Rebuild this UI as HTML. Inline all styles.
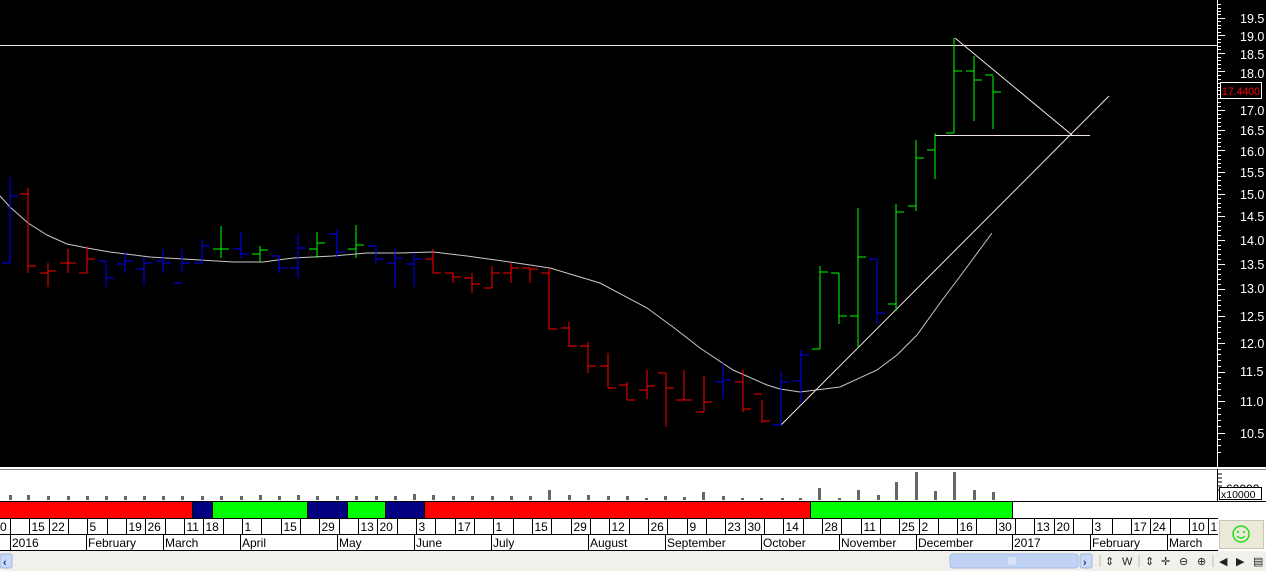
<!DOCTYPE html>
<html><head><meta charset="utf-8"><style>
body{margin:0;width:1266px;height:571px;overflow:hidden;background:#fff;font-family:"Liberation Sans",sans-serif}
svg{display:block}
</style></head><body>
<svg width="1266" height="571" xmlns="http://www.w3.org/2000/svg" font-family="Liberation Sans, sans-serif">
<rect x="0" y="0" width="1266" height="467" fill="#000"/>
<line x1="0" y1="45.5" x2="1217" y2="45.5" stroke="#f3e4e4" stroke-width="1"/>
<polyline fill="none" stroke="#c8c8c8" stroke-width="1" points="0,196 10,207 28,223 47,235 67,244 87,248 110,252 150,257 200,260 233,262 263,262 293,258 333,256 367,253 400,253 433,252 467,256 510,262 550,268 600,283 647,308 673,327 700,348 733,370 767,385 780,389 800,392 840,387 877,370 897,355 917,335 940,303 967,267 992,233"/>
<g stroke="#f3e4e4" stroke-width="1" fill="none">
<line x1="781" y1="425" x2="1109" y2="96"/>
<line x1="955" y1="38" x2="1072" y2="135"/>
<line x1="935" y1="135.5" x2="1090" y2="135.5"/>
</g>
<g fill="none" stroke-width="1" shape-rendering="crispEdges">
<g stroke="#0000ff">
<path d="M10 177V263M2 263H10M10 196H18"/>
<path d="M106 261V287M98 261H106M106 278H114"/>
<path d="M125 252V273M117 264H125M125 261H133"/>
<path d="M144 257V286M136 269H144M144 263H152"/>
<path d="M163 249V273M155 261H163M163 263H171"/>
<path d="M182 249V273M174 283H182M182 263H190"/>
<path d="M202 239V263M194 263H202M202 246H210"/>
<path d="M241 232V258M233 249H241M241 254H249"/>
<path d="M279 255V273M271 256H279M279 268H287"/>
<path d="M298 234V278M290 268H298M298 248H306"/>
<path d="M337 229V258M329 234H337M337 252H345"/>
<path d="M376 246V263M368 246H376M376 259H384"/>
<path d="M395 249V287M387 263H395M395 258H403"/>
<path d="M414 253V287M406 264H414M414 259H422"/>
<path d="M723 363V399M715 382H723M723 380H731"/>
<path d="M781 371V425M773 425H781M781 382H789"/>
<path d="M801 350V403M793 381H801M801 355H809"/>
<path d="M877 259V324M869 259H877M877 313H885"/>
</g>
<g stroke="#ff0000">
<path d="M28 188V273M20 194H28M28 266H36"/>
<path d="M48 263V287M40 273H48M48 271H56"/>
<path d="M68 249V273M60 263H68M68 263H76"/>
<path d="M87 246V273M79 273H87M87 259H95"/>
<path d="M433 249V273M425 259H433M433 273H441"/>
<path d="M453 273V283M445 273H453M453 277H461"/>
<path d="M472 273V293M464 278H472M472 284H480"/>
<path d="M492 266V288M484 288H492M492 273H500"/>
<path d="M511 263V283M503 273H511M511 268H519"/>
<path d="M530 268V283M522 268H530M530 269H538"/>
<path d="M549 268V329M541 273H549M549 329H557"/>
<path d="M569 322V347M561 328H569M569 346H577"/>
<path d="M588 342V373M580 346H588M588 366H596"/>
<path d="M608 353V388M600 366H608M608 388H616"/>
<path d="M627 382V400M619 385H627M627 400H635"/>
<path d="M647 370V399M639 390H647M647 386H655"/>
<path d="M666 373V427M658 373H666M666 388H674"/>
<path d="M684 370V400M676 400H684M684 400H692"/>
<path d="M704 376V412M696 412H704M704 402H712"/>
<path d="M743 370V412M735 382H743M743 409H751"/>
<path d="M762 400V423M754 394H762M762 421H770"/>
</g>
<g stroke="#00ff00">
<path d="M221 226V258M213 249H221M221 249H229"/>
<path d="M260 246V262M252 254H260M260 250H268"/>
<path d="M317 232V258M309 249H317M317 243H325"/>
<path d="M356 225V258M348 249H356M356 245H364"/>
<path d="M820 266V349M812 349H820M820 272H828"/>
<path d="M839 273V324M831 273H839M839 316H847"/>
<path d="M858 208V348M850 316H858M858 257H866"/>
<path d="M896 204V311M888 304H896M896 212H904"/>
<path d="M916 140V211M908 206H916M916 158H924"/>
<path d="M935 133V179M927 150H935"/>
<path d="M954 38V133M946 133H954M954 71H962"/>
<path d="M974 56V121M966 71H974M974 80H982"/>
<path d="M993 76V129M985 75H993M993 92H1001"/>
</g>
</g>
<line x1="1217.5" y1="0" x2="1217.5" y2="467" stroke="#fff"/>
<path id="ticks" stroke="#fff" stroke-width="1" d=""/>
<g fill="#fff" font-size="12.5">
<text x="1240" y="23">19.5</text><text x="1240" y="41">19.0</text><text x="1240" y="59">18.5</text><text x="1240" y="78">18.0</text>
<text x="1240" y="115">17.0</text><text x="1240" y="135">16.5</text><text x="1240" y="156">16.0</text><text x="1240" y="177">15.5</text>
<text x="1240" y="199">15.0</text><text x="1240" y="221">14.5</text><text x="1240" y="245">14.0</text><text x="1240" y="269">13.5</text>
<text x="1240" y="293">13.0</text><text x="1240" y="321">12.5</text><text x="1240" y="348">12.0</text><text x="1240" y="376">11.5</text>
<text x="1240" y="406">11.0</text><text x="1240" y="438">10.5</text>
</g>
<rect x="1220.5" y="82.5" width="41" height="16" fill="#000" stroke="#fff"/>
<text x="1222" y="95" fill="#ff0000" font-size="11" textLength="38" lengthAdjust="spacingAndGlyphs">17.4400</text>
<rect x="0" y="467" width="1266" height="2" fill="#fff"/>
<rect x="0" y="469" width="1266" height="1" fill="#888"/>
<g fill="#666" id="vol"></g>
<line x1="1217.5" y1="469" x2="1217.5" y2="501" stroke="#000"/>
<path d="M1217 474h5M1217 478h5M1217 482h5M1217 486h5M1217 490h8" stroke="#000"/>
<text x="1226" y="493" font-size="12" fill="#000">60000</text>
<rect x="1219.5" y="487.5" width="42" height="12" fill="#fff" stroke="#000"/>
<text x="1221" y="498" font-size="10.5" fill="#000">x10000</text>
<rect x="0" y="501" width="1266" height="1" fill="#000"/>
<rect x="0" y="502" width="192" height="16" fill="#ff0000"/>
<rect x="192" y="502" width="20" height="16" fill="#000080"/>
<rect x="212" y="502" width="95" height="16" fill="#00ff00"/>
<rect x="307" y="502" width="40" height="16" fill="#000080"/>
<rect x="347" y="502" width="38" height="16" fill="#00ff00"/>
<rect x="385" y="502" width="39" height="16" fill="#000080"/>
<rect x="424" y="502" width="386" height="16" fill="#ff0000"/>
<rect x="810" y="502" width="202" height="16" fill="#00ff00"/>
<path d="M192.5 502V518M212.5 502V518M307.5 502V518M347.5 502V518M385.5 502V518M424.5 502V518M810.5 502V518M1012.5 502V518" stroke="#000"/>
<rect x="0" y="518" width="1218" height="1" fill="#000"/>
<rect x="0" y="534" width="1218" height="1" fill="#000"/>
<rect x="0" y="550" width="1218" height="1" fill="#000"/>
<path id="dsep" stroke="#000" d=""/>
<g id="dlab" font-size="12" fill="#000"></g>
<text x="0" y="531" font-size="12">0</text>
<path d="M10.5 535V550M86.5 535V550M163.5 535V550M240.5 535V550M337.5 535V550M414.5 535V550M491.5 535V550M588.5 535V550M665.5 535V550M761.5 535V550M839.5 535V550M916.5 535V550M1012.5 535V550M1090.5 535V550M1167.5 535V550" stroke="#000"/>
<g font-size="12" fill="#000">
<text x="12" y="547">2016</text><text x="88" y="547">February</text><text x="165" y="547">March</text><text x="242" y="547">April</text>
<text x="339" y="547">May</text><text x="416" y="547">June</text><text x="493" y="547">July</text><text x="590" y="547">August</text>
<text x="667" y="547">September</text><text x="763" y="547">October</text><text x="841" y="547">November</text><text x="918" y="547">December</text>
<text x="1014" y="547">2017</text><text x="1092" y="547">February</text><text x="1169" y="547">March</text>
</g>
<rect x="1218" y="518" width="48" height="33" fill="#fff"/>
<rect x="1219.5" y="520.5" width="44" height="28" fill="#ece9d8" stroke="#c8c5b5"/>
<circle cx="1241" cy="534" r="8" fill="none" stroke="#00e000" stroke-width="1.3"/>
<circle cx="1238" cy="532" r="1" fill="#00e000"/><circle cx="1244" cy="532" r="1" fill="#00e000"/>
<path d="M1237 536q4 4 8 0" fill="none" stroke="#00e000" stroke-width="1.2"/>
<rect x="0" y="551" width="1266" height="20" fill="#f1f0ea"/>
<rect x="0" y="554" width="12" height="14" rx="2" fill="#c9d8f5" stroke="#9fb4e0"/>
<text x="3" y="566" font-size="11" fill="#1a3c8c" font-weight="bold">‹</text>
<rect x="950" y="554" width="128" height="14" rx="3" fill="#c0d2f4" stroke="#a4bce8"/>
<path d="M1009 557v8M1011 557v8M1013 557v8M1015 557v8" stroke="#eef3fd"/>
<rect x="1080" y="554" width="12" height="14" rx="2" fill="#c9d8f5" stroke="#9fb4e0"/>
<text x="1083" y="566" font-size="11" fill="#1a3c8c" font-weight="bold">›</text>
<g fill="#222" font-size="11">
<text x="1105" y="565">⇕</text><text x="1122" y="565">W</text><text x="1145" y="565">⇕</text><text x="1161" y="565">✛</text>
<text x="1179" y="565">⊖</text><text x="1197" y="565">⊕</text><text x="1219" y="565">◀</text><text x="1236" y="565">▶</text><text x="1253" y="565">▤</text>
</g>
<path d="M1100 555v12M1139 555v12M1213 555v12" stroke="#bbb"/>
</svg>
<script>
(function(){
var d='';
for(var p=10.2;p<=19.95;p+=0.1){var y=2008-670*Math.log(p);var maj=Math.abs(p*2-Math.round(p*2))<0.01;d+='M1217 '+(Math.round(y)+0.5)+'h'+(maj?8:4);}
document.getElementById('ticks').setAttribute('d',d);
var labs={1:'15',2:'22',4:'5',6:'19',7:'26',9:'11',10:'18',12:'1',14:'15',16:'29',18:'13',19:'20',21:'3',23:'17',25:'1',27:'15',29:'29',31:'12',33:'26',35:'9',37:'23',38:'30',40:'14',42:'28',44:'11',46:'25',47:'2',49:'16',51:'30',53:'13',54:'20',56:'3',58:'17',59:'24',61:'10',62:'17'};
var s='',g=document.getElementById('dlab'),ns='http://www.w3.org/2000/svg';
for(var k=0;k<=62;k++){var x=Math.round(10+19.33*k)+0.5;if(x<1217)s+='M'+x+' 519V534';
 if(labs[k]){var t=document.createElementNS(ns,'text');t.setAttribute('x',x+2);t.setAttribute('y',531);t.textContent=labs[k];g.appendChild(t);}}
document.getElementById('dsep').setAttribute('d',s);
var v=[[10,495],[28,495],[48,496],[68,496],[87,496],[106,496],[125,496],[144,496],[163,496],[182,496],[202,496],[221,496],[241,496],[260,495],[279,496],[298,495],[317,496],[337,496],[356,496],[376,496],[395,496],[414,494],[433,495],[453,496],[472,496],[492,496],[511,496],[530,496],[549,490],[569,495],[588,495],[608,496],[627,496],[646,498],[665,496],[684,497],[703,492],[723,496],[742,498],[761,498],[782,498],[800,498],[819,488],[839,498],[858,490],[878,495],[896,482],[916,472],[935,491],[954,472],[974,490],[993,492]];
var vg=document.getElementById('vol');
v.forEach(function(a){var r=document.createElementNS(ns,'rect');r.setAttribute('x',a[0]-1);r.setAttribute('y',a[1]);r.setAttribute('width',3);r.setAttribute('height',500-a[1]);vg.appendChild(r);});
})();
</script>
</body></html>
